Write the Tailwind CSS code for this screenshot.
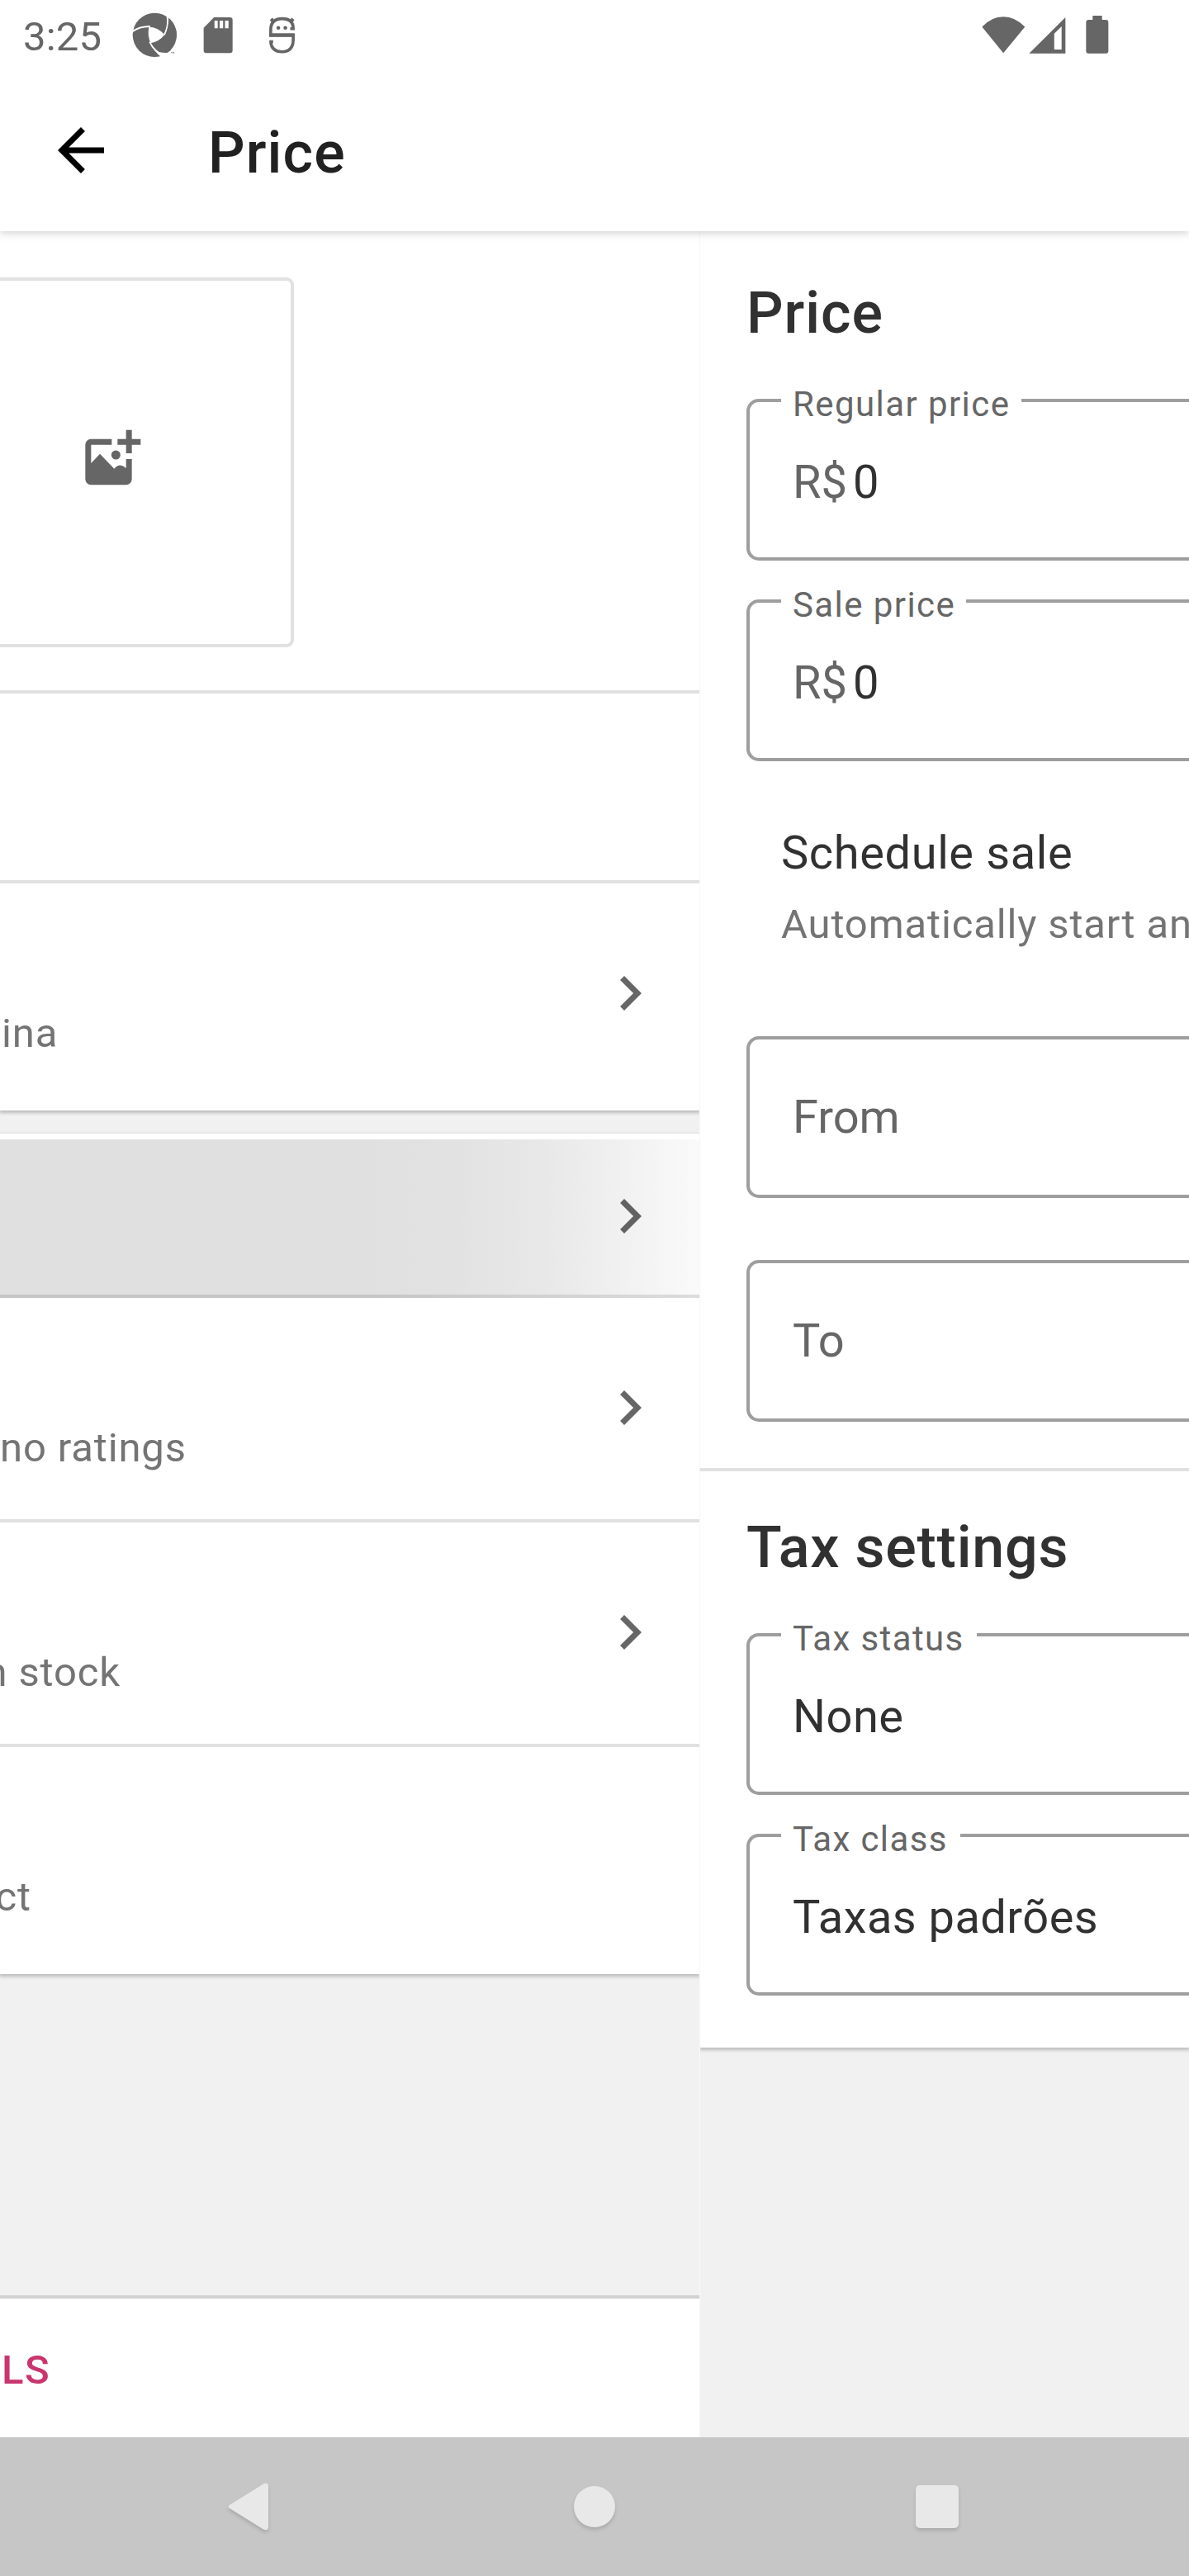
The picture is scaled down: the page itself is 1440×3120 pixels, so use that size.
<!DOCTYPE html>
<html lang="en">
<head>
<meta charset="utf-8">
<title>Price</title>
<script src="https://cdn.jsdelivr.net/npm/@tailwindcss/browser@4"></script>
</head>
<body class="flex h-[3120px] w-[1440px] flex-col overflow-hidden bg-[#f1f1f1] font-['Roboto',sans-serif] text-[#313131]">

<!-- Status bar and toolbar -->
<header class="relative z-10 h-[280px] shrink-0 bg-white shadow-[0_3px_7px_rgba(0,0,0,0.1),0_4px_14px_rgba(0,0,0,0.06)]">
  <div class="flex h-[84px] items-center justify-between pl-7 pr-[97px] text-[#666]">
    <div class="flex items-center">
      <span class="w-[132px] pt-[5px] text-[49px] leading-[58px] tracking-[0.2px]">3:25</span>
      <svg class="size-[54px]" viewBox="480 45 162 162" fill="none">
        <circle cx="562" cy="127" r="80" fill="#666"/>
        <path d="M541 98Q573 98 598 126Q579 151 547 157Q535 128 541 98Z" fill="#fff"/>
        <path d="M480 115Q508 95 546 96M607 55Q615 92 597 127M544 152Q560 188 598 205" stroke="#fff" stroke-width="6"/>
        <path d="M585 207Q570 195 560 180Q585 198 620 188L645 186V210Z" fill="#fff"/>
        <path d="M549 158Q584 152 601 125Q612 100 613 66Q641 92 642 127Q640 164 606 192Q575 192 549 158Z" fill="#666"/>
        <path d="M621 191H626M628 194V190L630 192L632 190V194" stroke="#666" stroke-width="2"/>
      </svg>
      <svg class="ml-8 h-[45px] w-9" viewBox="738 59 110 135">
        <path fill="#666" fill-rule="evenodd" d="M778 61H837a10 10 0 0 1 10 10V183a10 10 0 0 1-10 10H750a10 10 0 0 1-10-10V100ZM780 73V101H792V73ZM799 73V101H812V73ZM819 73V101H832V73Z"/>
      </svg>
      <svg class="ml-[43px] h-[45px] w-[33px]" viewBox="975 58 99 137" fill="none" stroke="#666">
        <path stroke-width="11" d="M1055 103H1066Q1066 66 1025 66Q983 66 983 108V126H1066V146Q1064 188 1025 188Q986 188 983 152M978 151H992"/>
        <path stroke-width="13" d="M978 127H1071"/>
        <path stroke-width="8" d="M983 68L994 79M992 65L983 75M1067 68L1056 79M1058 65L1067 75"/>
        <circle cx="1011" cy="100" r="7" fill="#666" stroke="none"/>
        <circle cx="1037" cy="100" r="7" fill="#666" stroke="none"/>
      </svg>
    </div>
    <div class="flex items-center">
      <svg class="h-[45px] w-[53px]" viewBox="144 56 160 136"><path fill="#666" d="M145 94Q180 57 223 57Q266 57 302 94L223 190Z"/></svg>
      <svg class="ml-1 size-[45px]" viewBox="315 56 136 136"><path fill="#666" fill-rule="evenodd" d="M316 191L449 59V191ZM408 119V177H435V92Z"/></svg>
      <svg class="ml-6 h-[46px] w-7" viewBox="524 57 84 138" fill="#666"><path d="M549 57H583V80H549Z"/><rect x="525" y="72" width="81" height="122" rx="9"/></svg>
    </div>
  </div>
  <div class="flex h-[196px] items-center pl-[56px]">
    <svg class="size-[84px]" viewBox="0 0 24 24"><path d="M20 11H7.83l5.59-5.59L12 4l-8 8 8 8 1.41-1.41L7.83 13H20v-2z"/></svg>
    <h1 class="ml-28 pt-[6px] text-[70px] font-medium leading-[82px] tracking-[1.1px] text-[#212121]">Price</h1>
  </div>
</header>

<main class="flex min-h-0 flex-1">
  <!-- Product detail screen sliding out -->
  <section class="flex w-[848px] shrink-0 flex-col overflow-hidden border-r border-[#f7f7f7] text-[49px] leading-[64px] tracking-[0.86px] text-[#747474]">
    <div class="bg-white shadow-[0_2px_4px_1px_rgba(0,0,0,0.22)]">
      <div class="h-[560px] border-b-4 border-[#e1e1e1] pt-14">
        <div class="h-[448px] w-[356px] rounded-r-[9px] border-4 border-l-0 border-[#e1e1e1]">
          <svg class="ml-[103px] mt-[180px] size-[68px]" viewBox="309 601 204 204" fill="#666">
            <path d="M406 636H331a21 21 0 0 0-21 21V782a21 21 0 0 0 21 21H458a21 21 0 0 0 21-21V709H458V742Q436 720 415 744L363 690L331 724V657H406Z"/>
            <path d="M458 603H479V636H511V657H479V688H458V657H427V636H458Z"/>
            <circle cx="421" cy="694" r="16.5"/>
          </svg>
        </div>
      </div>
      <div class="h-[230px] border-b-4 border-[#e1e1e1]"></div>
      <div class="flex h-[275px] items-start justify-between pr-[42px]">
        <span class="ml-[2px] mt-[150px]">ina</span>
        <svg class="mt-[91px] size-[84px]" viewBox="0 0 24 24" fill="#666"><path d="M10 6L8.590 7.410 13.170 12l-4.580 4.590L10 18l6-6z"/></svg>
      </div>
    </div>

    <div class="mt-7 bg-white pt-[7px] shadow-[0_2px_4px_1px_rgba(0,0,0,0.22)]">
      <div class="h-48 bg-[linear-gradient(90deg,#c6c6c6_460px,#dcdcdc_847px)] pb-1">
        <div class="flex h-[188px] items-start justify-end bg-[linear-gradient(90deg,#e0e0e0_440px,#e2e2e2_550px,#e8e8e8_660px,#f0f0f0_745px,#f6f6f6_805px,#fafafa_847px)] pr-[42px]">
          <svg class="mt-[51px] size-[84px]" viewBox="0 0 24 24" fill="#626262"><path d="M10 6L8.590 7.410 13.170 12l-4.580 4.590L10 18l6-6z"/></svg>
        </div>
      </div>
      <div class="flex h-[272px] items-start justify-between border-b-4 border-[#e1e1e1] pr-[42px]">
        <span class="mt-[150px]">no ratings</span>
        <svg class="mt-[91px] size-[84px]" viewBox="0 0 24 24" fill="#666"><path d="M10 6L8.590 7.410 13.170 12l-4.580 4.590L10 18l6-6z"/></svg>
      </div>
      <div class="flex h-[272px] items-start justify-between border-b-4 border-[#e1e1e1] pr-[42px]">
        <span class="mt-[150px] flex w-[146px] justify-end whitespace-nowrap">n stock</span>
        <svg class="mt-[91px] size-[84px]" viewBox="0 0 24 24" fill="#666"><path d="M10 6L8.590 7.410 13.170 12l-4.580 4.590L10 18l6-6z"/></svg>
      </div>
      <div class="flex h-[275px] items-start">
        <span class="mt-[150px] flex w-[38px] justify-end whitespace-nowrap">ct</span>
      </div>
    </div>

    <div class="mt-auto h-[172px] border-t-4 border-[#d2d2d2] bg-white pl-[2px] pt-[55px] font-medium tracking-[1.5px] text-[#c9356e]">LS</div>
  </section>

  <!-- Price screen sliding in -->
  <section class="flex-1 overflow-hidden">
    <div class="bg-white text-[56px] leading-[66px] shadow-[0_2px_4px_1px_rgba(0,0,0,0.22)]">
      <div class="border-b-4 border-[#e1e1e1] pb-14 pl-14 pt-[58px]">
        <h2 class="text-[70px] font-medium leading-[82px] tracking-[0.9px]">Price</h2>
        <div class="relative mt-[63px] flex h-[196px] rounded-l-[15px] border-4 border-r-0 border-[#9e9e9e] pl-[52px] pt-[64px]">
          <span class="absolute -top-[21px] left-[38px] w-[291px] whitespace-nowrap bg-white pl-[14px] text-[42px] leading-[48px] tracking-[1.42px] text-[#666]">Regular price</span>
          <span class="w-[73px] text-[#666]">R$</span><span>0</span>
        </div>
        <div class="relative mt-[47px] flex h-[196px] rounded-l-[15px] border-4 border-r-0 border-[#9e9e9e] pl-[52px] pt-[64px]">
          <span class="absolute -top-[21px] left-[38px] w-[224px] whitespace-nowrap bg-white pl-[14px] text-[42px] leading-[48px] tracking-[1.42px] text-[#666]">Sale price</span>
          <span class="w-[73px] text-[#666]">R$</span><span>0</span>
        </div>
        <p class="mt-[78px] pl-[42px] tracking-[0.6px]">Schedule sale</p>
        <p class="mt-[25px] whitespace-nowrap pl-[42px] text-[49px] leading-[58px] tracking-[0.86px] text-[#747474]">Automatically start an</p>
        <div class="mt-[106px] h-[196px] rounded-l-[15px] border-4 border-r-0 border-[#9e9e9e] pl-[52px] pt-[61px] text-[#666]">From</div>
        <div class="mt-[75px] h-[196px] rounded-l-[15px] border-4 border-r-0 border-[#9e9e9e] pl-[52px] pt-[61px] text-[#666]">To</div>
      </div>
      <div class="pb-[63px] pl-14 pt-[51px]">
        <h2 class="text-[70px] font-medium leading-[82px] tracking-[0.76px]">Tax settings</h2>
        <div class="relative mt-[63px] h-[196px] rounded-l-[15px] border-4 border-r-0 border-[#9e9e9e] pl-[52px] pt-[64px] tracking-[0.5px]">
          <span class="absolute -top-[21px] left-[38px] w-[237px] whitespace-nowrap bg-white pl-[14px] text-[42px] leading-[48px] tracking-[1.4px] text-[#666]">Tax status</span>
          None
        </div>
        <div class="relative mt-[47px] h-[196px] rounded-l-[15px] border-4 border-r-0 border-[#9e9e9e] pl-[52px] pt-[64px] tracking-[0.45px]">
          <span class="absolute -top-[21px] left-[38px] w-[217px] whitespace-nowrap bg-white pl-[14px] text-[42px] leading-[48px] tracking-[1.4px] text-[#666]">Tax class</span>
          Taxas padrões
        </div>
      </div>
    </div>
  </section>
</main>

<!-- System navigation -->
<nav class="relative flex h-[168px] shrink-0 items-center justify-between bg-[#c6c6c6] px-[263px]">
  <svg class="size-[84px] drop-shadow-[0_3px_2px_rgba(0,0,0,0.14)]" viewBox="0 0 84 84"><path fill="#e8e8e8" d="M15 40L56 14.600Q62 12 62 18V66Q62 72 56 69.400L15 44Q12 42 15 40Z"/></svg>
  <svg class="size-[84px] drop-shadow-[0_3px_2px_rgba(0,0,0,0.14)]" viewBox="0 0 84 84"><circle cx="42" cy="42" r="25" fill="#e8e8e8"/></svg>
  <svg class="size-[84px] drop-shadow-[0_3px_2px_rgba(0,0,0,0.14)]" viewBox="0 0 84 84"><rect x="16" y="16" width="52" height="52" rx="5" fill="#e8e8e8"/></svg>
</nav>
</body>
</html>
